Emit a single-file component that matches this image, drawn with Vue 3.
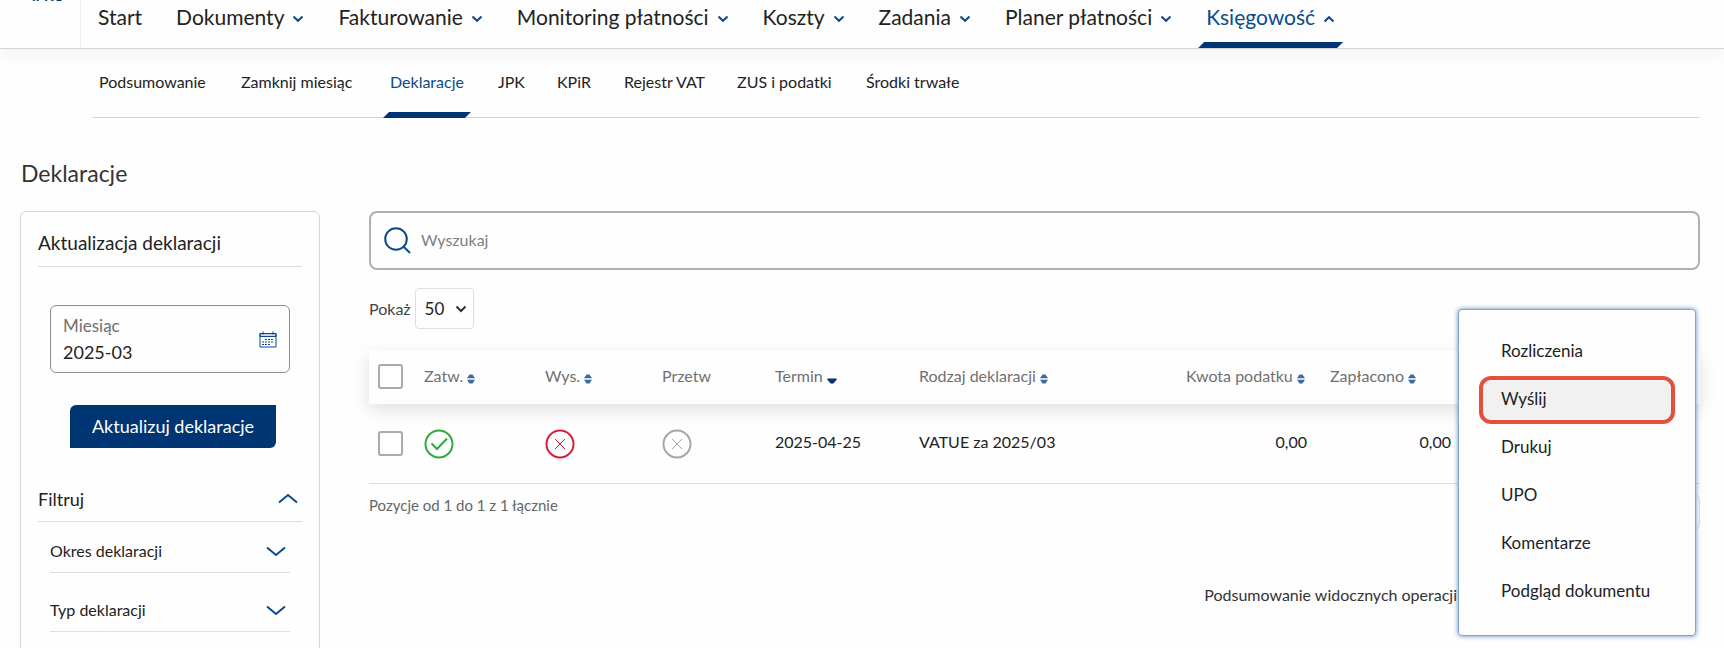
<script setup>
import { ref } from 'vue'

const nav = [
  { label: 'Start', plain: true },
  { label: 'Dokumenty' },
  { label: 'Fakturowanie' },
  { label: 'Monitoring płatności' },
  { label: 'Koszty' },
  { label: 'Zadania' },
  { label: 'Planer płatności' },
  { label: 'Księgowość', active: true },
]
const subnav = ['Podsumowanie', 'Zamknij miesiąc', 'Deklaracje', 'JPK', 'KPiR', 'Rejestr VAT', 'ZUS i podatki', 'Środki trwałe']
const filters = ['Okres deklaracji', 'Typ deklaracji']
const columns = [
  { key: 'zatw', label: 'Zatw.', sort: 'both' },
  { key: 'wys', label: 'Wys.', sort: 'both' },
  { key: 'przetw', label: 'Przetw' },
  { key: 'termin', label: 'Termin', sort: 'down' },
  { key: 'rodzaj', label: 'Rodzaj deklaracji', sort: 'both' },
  { key: 'kwota', label: 'Kwota podatku', sort: 'both' },
  { key: 'zaplacono', label: 'Zapłacono', sort: 'both' },
]
const actions = ['Rozliczenia', 'Wyślij', 'Drukuj', 'UPO', 'Komentarze', 'Podgląd dokumentu']
const month = ref('2025-03')
const query = ref('')
const pageSize = ref('50')
</script>

<template>
  <div class="page">
    <header class="top">
      <a class="logo" href="#" aria-label="iPKO"><span>iPKO</span></a>
      <nav class="main-nav" aria-label="Menu główne">
        <a v-for="n in nav" :key="n.label" href="#" class="nav-link" :class="{ active: n.active }">
          {{ n.label }}
          <svg v-if="!n.plain" class="caret" :class="{ up: n.active }" viewBox="0 0 12 8" aria-hidden="true"><path d="M1.500 1.500 6 5.800l4.500-4.300" /></svg>
        </a>
      </nav>
    </header>

    <nav class="sub-nav" aria-label="Księgowość">
      <a v-for="s in subnav" :key="s" href="#" class="sub-link" :class="{ active: s === 'Deklaracje' }">{{ s }}</a>
    </nav>

    <h1>Deklaracje</h1>

    <div class="layout">
      <aside class="panel">
        <h2 class="panel-head">Aktualizacja deklaracji</h2>
        <div class="month">
          <div class="month-text">
            <label for="month">Miesiąc</label>
            <input id="month" v-model="month" type="text">
          </div>
          <button type="button" class="icon-btn" aria-label="Kalendarz">
            <svg class="calendar" viewBox="0 0 18 17" aria-hidden="true">
              <path class="band" d="M1 2.500h16v3H1z" />
              <path d="M1 2.500h16v13.500H1zM1 5.500h16" />
              <path d="M4 .5v3M14 .5v3" />
              <path class="dots" d="M6 8.500h9M3 11h12M3 13.500h9" />
            </svg>
          </button>
        </div>
        <button type="button" class="primary">Aktualizuj deklaracje</button>
        <button type="button" class="fold outer">
          Filtruj
          <svg class="chev up" viewBox="0 0 20 11" aria-hidden="true"><path d="M1 1.500 10 9l9-7.500" /></svg>
        </button>
        <div class="filters">
          <button v-for="f in filters" :key="f" type="button" class="fold">
            {{ f }}
            <svg class="chev" viewBox="0 0 20 11" aria-hidden="true"><path d="M1 1.500 10 9l9-7.500" /></svg>
          </button>
        </div>
      </aside>

      <main class="content">
        <div class="search">
          <svg viewBox="0 0 28 28" aria-hidden="true"><circle cx="12" cy="12" r="10.800" /><path d="m19 19 7 7" /></svg>
          <input v-model="query" type="search" placeholder="Wyszukaj" aria-label="Wyszukaj">
        </div>
        <div class="length">
          <label for="size">Pokaż</label>
          <div class="select">
            <select id="size" v-model="pageSize"><option>50</option></select>
            <svg viewBox="0 0 12 8" aria-hidden="true"><path d="M1.500 1.500 6 6l4.500-4.500" /></svg>
          </div>
        </div>

        <div class="table-area">
          <table>
            <colgroup>
              <col class="c-check"><col class="c-zatw"><col class="c-wys"><col class="c-przetw"><col class="c-termin">
              <col class="c-rodzaj"><col class="c-kwota"><col class="c-zapl"><col>
            </colgroup>
            <thead>
              <tr>
                <th><input type="checkbox" aria-label="Zaznacz wszystkie"></th>
                <th v-for="c in columns" :key="c.key">
                  {{ c.label }}
                  <svg v-if="c.sort === 'both'" class="sort" viewBox="0 0 8 10" aria-hidden="true"><path d="M0 4.200 2.500.5h3L8 4.200zM0 5.800h8L5.500 9.500h-3z" /></svg>
                  <svg v-if="c.sort === 'down'" class="sort down" viewBox="0 0 10 6" aria-hidden="true"><path d="M.3.500h9.400v1L6.500 5.500h-3L.3 1.500z" /></svg>
                </th>
                <th></th>
              </tr>
            </thead>
            <tbody>
              <tr>
                <td><input type="checkbox" aria-label="Zaznacz VATUE za 2025/03"></td>
                <td><svg class="status ok" viewBox="0 0 30 30" role="img" aria-label="Tak"><circle cx="15" cy="15" r="13.500" /><path d="m7.500 14.500 5.500 5.500L23 9.500" /></svg></td>
                <td><svg class="status no" viewBox="0 0 30 30" role="img" aria-label="Nie"><circle cx="15" cy="15" r="13.500" /><path class="cross" d="m10 10 10 10M20 10 10 20" /></svg></td>
                <td><svg class="status off" viewBox="0 0 30 30" role="img" aria-label="Nie"><circle cx="15" cy="15" r="13.500" /><path class="cross" d="m10 10 10 10M20 10 10 20" /></svg></td>
                <td class="text">2025-04-25</td>
                <td class="text">VATUE za 2025/03</td>
                <td class="text num">0,00</td>
                <td class="text num">0,00</td>
                <td></td>
              </tr>
            </tbody>
          </table>
          <div class="table-foot">
            <p>Pozycje od 1 do 1 z 1 łącznie</p>
            <span class="pager"></span>
          </div>
          <p class="summary">Podsumowanie widocznych operacji</p>

          <ul class="menu">
            <li v-for="a in actions" :key="a">
              <button type="button" :class="{ marked: a === 'Wyślij' }">{{ a }}</button>
            </li>
          </ul>
        </div>
      </main>
    </div>
  </div>
</template>

<style>
body {
  background: #fefefe;
}
</style>

<style scoped>
.page {
  height: 100vh;
  overflow: hidden;
  font-family: Lato, "Noto Sans", sans-serif;
  font-size: 16px;
  line-height: 20px;
  color: #222;
}
.page *, .page *::before, .page *::after {
  box-sizing: border-box;
}
h1, h2, p, ul {
  margin: 0;
  padding: 0;
  font-weight: 400;
}
a {
  color: inherit;
  text-decoration: none;
}
button, input, select {
  font: inherit;
  color: inherit;
  border: 0;
  margin: 0;
  padding: 0;
  background: none;
}
svg {
  fill: none;
  stroke: #0c4a8c;
  flex: none;
}
.top {
  display: flex;
  height: 49px;
  border-bottom: 1px solid #d4d4d4;
  box-shadow: 0 8px 16px rgba(0, 0, 0, 0.04);
}
.logo {
  width: 81px;
  border-right: 1px solid #ededed;
  overflow: hidden;
  color: #003574;
  font-size: 14px;
  font-weight: 700;
}
.logo span {
  display: block;
  margin: -14px 0 0 32px;
  line-height: 20px;
}
.main-nav {
  display: flex;
  gap: 18px;
  padding-left: 9px;
}
.nav-link {
  position: relative;
  display: flex;
  gap: 8px;
  padding: 3px 8px 0;
  font-size: 21px;
  line-height: 28px;
  white-space: nowrap;
}
.nav-link.active, .sub-link.active {
  color: #0c4a8c;
}
.nav-link.active::after, .sub-link.active::after {
  content: "";
  position: absolute;
  left: 0;
  right: 0;
  bottom: 0;
  height: 6px;
  background: #003574;
  clip-path: polygon(6px 0, 100% 0, calc(100% - 6px) 100%, 0 100%);
}
.caret {
  width: 12px;
  height: 8px;
  margin-top: 12px;
  stroke-width: 2;
}
.up {
  transform: rotate(180deg);
}
.sub-nav {
  display: grid;
  grid-template-columns: 142px 149px 108px 59px 67px 113px 129px auto;
  justify-content: start;
  justify-items: start;
  height: 69px;
  margin: 0 24px 0 92px;
  padding-top: 23px;
  border-bottom: 1px solid #d4d4d4;
}
.sub-link {
  position: relative;
  padding: 0 7px;
  white-space: nowrap;
}
.sub-link.active::after {
  bottom: -1px;
}
h1 {
  margin: 42px 0 25px 21px;
  font-size: 23px;
  line-height: 26px;
  color: #333;
}
.layout {
  display: flex;
  align-items: flex-start;
  gap: 49px;
  padding: 0 24px 0 20px;
}
.panel {
  width: 300px;
  height: 480px;
  flex: none;
  padding: 20px 17px;
  border: 1px solid #d6d6d6;
  border-radius: 6px;
}
.panel-head {
  padding: 1px 0 13px;
  font-size: 19px;
  border-bottom: 1px solid #dedede;
}
.month {
  display: flex;
  align-items: center;
  justify-content: space-between;
  height: 68px;
  margin: 38px 12px 32px;
  padding: 0 12px;
  border: 1px solid #8c8c8c;
  border-radius: 6px;
}
.month-text {
  display: flex;
  flex-direction: column;
  gap: 6px;
  min-width: 0;
  font-size: 18px;
}
.month-text label {
  font-size: 17px;
  color: #707070;
}
.month-text input {
  width: 120px;
}
.icon-btn {
  display: flex;
}
.calendar {
  width: 18px;
  height: 17px;
}
.calendar .band {
  fill: #c3d2e6;
}
.calendar .dots {
  stroke-dasharray: 2 1;
}
.primary {
  display: block;
  width: 206px;
  height: 43px;
  margin: 0 26px 0 auto;
  padding-bottom: 2px;
  border-radius: 6px 0;
  background: #003574;
  color: #fff;
  font-size: 18px;
}
.fold {
  display: flex;
  align-items: center;
  justify-content: space-between;
  width: 100%;
  height: 59px;
  padding: 16px 4px 0 0;
  border-bottom: 1px solid #dedede;
}
.fold.outer {
  height: 74px;
  padding-top: 28px;
  font-size: 18px;
}
.filters {
  margin: 0 12px;
}
.filters .fold:first-child {
  height: 51px;
  padding-top: 8px;
}
.chev {
  width: 20px;
  height: 11px;
  stroke-width: 2;
}
.content {
  flex: 1;
  min-width: 0;
}
.search {
  display: flex;
  align-items: center;
  gap: 9px;
  height: 59px;
  padding: 0 13px;
  border: 2px solid #b0b0b0;
  border-radius: 8px;
}
.search svg {
  width: 28px;
  height: 28px;
  stroke-width: 2;
}
.search input {
  flex: 1;
  padding-bottom: 2px;
  outline: none;
}
.search input::placeholder {
  color: #808080;
  opacity: 1;
}
.length {
  display: flex;
  align-items: center;
  gap: 4px;
  margin: 18px 0 21px;
  color: #444;
}
.select {
  position: relative;
  display: flex;
  align-items: center;
  color: #222;
}
.select select {
  width: 59px;
  height: 41px;
  padding-left: 9px;
  border: 1px solid #dedede;
  border-radius: 4px;
  appearance: none;
  font-size: 17px;
}
.select svg {
  position: absolute;
  right: 7px;
  width: 12px;
  height: 8px;
  stroke: #333;
  stroke-width: 2;
  pointer-events: none;
}
.table-area {
  position: relative;
}
table {
  width: 100%;
  table-layout: fixed;
  border-collapse: separate;
  border-spacing: 0;
}
.c-check { width: 55px; }
.c-zatw { width: 121px; }
.c-wys { width: 117px; }
.c-przetw { width: 113px; }
.c-termin { width: 144px; }
.c-rodzaj { width: 267px; }
.c-kwota { width: 144px; }
.c-zapl { width: 144px; }
thead {
  box-shadow: 0 6px 18px rgba(0, 0, 0, 0.12);
}
th {
  height: 54px;
  padding: 0 0 2px;
  text-align: left;
  font-weight: 400;
  color: #707070;
  white-space: nowrap;
}
th:first-child, td:first-child {
  padding-left: 9px;
}
td {
  height: 80px;
  padding: 0;
  border-bottom: 1px solid #dedede;
}
.text {
  padding-bottom: 3px;
}
.num {
  padding-right: 23px;
  text-align: right;
}
input[type="checkbox"] {
  display: block;
  appearance: none;
  width: 25px;
  height: 25px;
  border: 2px solid #aaa;
  border-radius: 3px;
  background: #fff;
}
.sort {
  width: 8px;
  height: 10px;
  margin-bottom: -2px;
  fill: #3d6ba3;
  stroke: none;
}
.sort.down {
  width: 10px;
  height: 6px;
  fill: #003574;
}
.status {
  display: block;
  width: 30px;
  height: 30px;
  stroke-width: 2;
}
.cross {
  stroke-width: 1;
}
.ok { stroke: #2eaa3c; }
.no { stroke: #d81f3a; }
.off { stroke: #a6a6a6; }
.table-foot {
  display: flex;
  justify-content: space-between;
  padding-top: 11px;
  font-size: 15px;
  color: #666;
}
.pager {
  width: 32px;
  height: 34px;
  border: 1px solid #e4e4e4;
  border-radius: 4px;
}
.summary {
  margin: 56px 243px 0 0;
  text-align: right;
  color: #333;
}
.menu {
  position: absolute;
  top: -41px;
  right: 4px;
  width: 238px;
  padding: 18px 20px 19px;
  list-style: none;
  background: #fefefe;
  border: 1px solid #7fa5cf;
  border-radius: 4px;
  box-shadow: 0 0 5px rgba(30, 95, 165, 0.7);
}
.menu button {
  display: block;
  width: 100%;
  height: 48px;
  padding: 0 0 2px 22px;
  text-align: left;
  font-size: 17px;
}
.menu .marked {
  padding-left: 18px;
  background: #f1f1f1;
  border: 4px solid #e5503c;
  border-radius: 12px;
}
</style>
